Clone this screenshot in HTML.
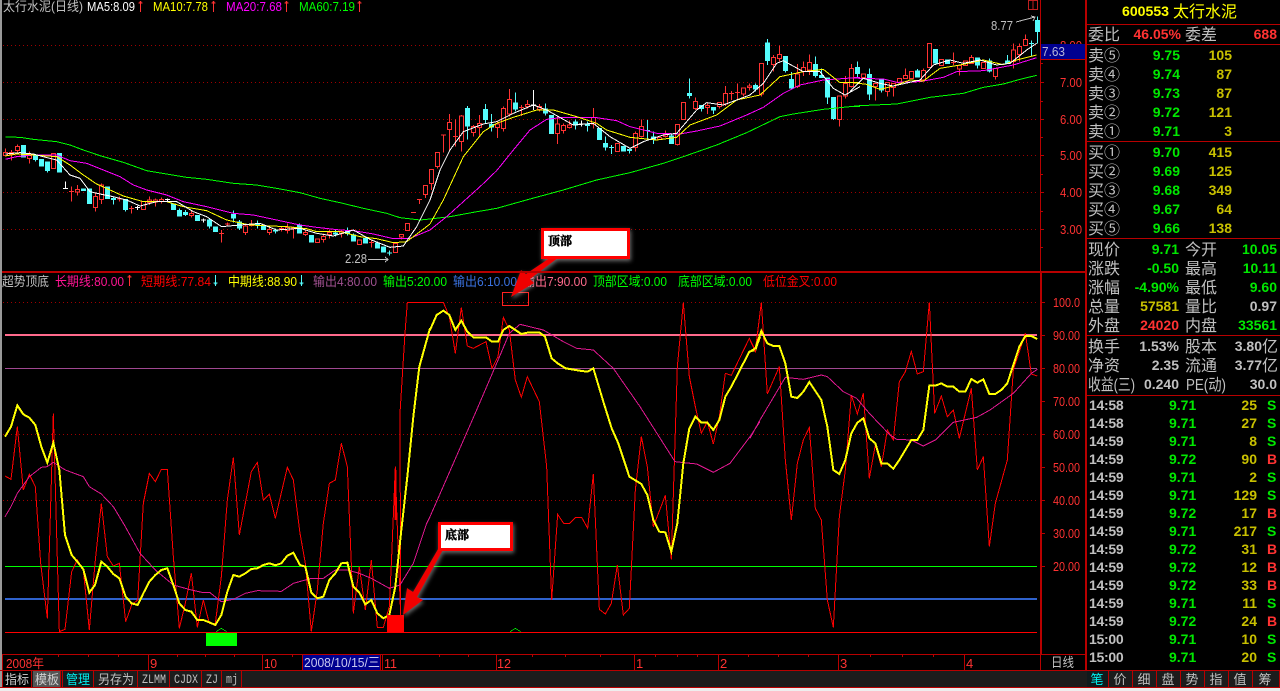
<!DOCTYPE html>
<html><head><meta charset="utf-8"><title>600553</title>
<style>
html,body{margin:0;padding:0;background:#000;width:1280px;height:691px;overflow:hidden}
svg{display:block}
text{font-family:"Liberation Sans","WenQuanYi Zen Hei","Noto Sans CJK SC",sans-serif;white-space:pre}
.s{font-size:13px}
.m{font-size:16px;fill:#c0c0c0}
.n{font-size:14px;font-weight:bold}
.n.w:not(.e){letter-spacing:-.3px}
.g{fill:#00e800}.y{fill:#c8c000}.r{fill:#ff3232}.w{fill:#c0c0c0}
.e{text-anchor:end}
.a{font-size:13px;fill:#ff3232;text-anchor:end}
.l{fill:none;shape-rendering:crispEdges}
.b{font-size:12px;font-weight:bold;font-family:"Noto Serif CJK SC",serif;fill:#000;stroke:#000;stroke-width:.5px}
</style></head><body>
<svg xmlns="http://www.w3.org/2000/svg" width="1280" height="691" viewBox="0 0 1280 691">
<rect width="1280" height="691" fill="#000"/>
<rect x="0" y="0" width="2" height="691" fill="#999"/>

<!-- grids -->
<path class="l" stroke="#a00000" stroke-dasharray="1 3" d="M3 45.5H1037M3 82.5H1037M3 119.5H1037M3 155.5H1037M3 192.5H1037M3 229.5H1037M3 302.5H1037M3 434.5H1037M3 500.5H1037"/>

<!-- CANDLES & MA part 1 -->
<g transform="scale(.33333)">
<path class="l" stroke="#ff3232" stroke-width="3" d="M16 445V470M34 450V482M52 433V458M88 455V490M214 560V605M232 555V587M286 580V635M304 550V612M358 590V605M394 618V640M448 590V615M466 595V620M484 593V610M574 632V652M664 690V728M682 668V680M736 670V705M754 660V680M808 680V705M844 680V695M862 670V700M880 680V716M916 690V708M970 700V728M988 690V716M1024 690V712M1114 720V743M1204 703V718M1258 599V612M1276 557V594M207 575h15M351 597h15M387 625h15M657 700h15M675 672h15M873 684h15M1107 727h15M1233 637h15M1251 599h15"/>
<path class="l" stroke="#ff3232" stroke-width="3" style="fill:#000" d="M10 457h12v10h-12zM28 457h12v6h-12zM46 440h12v12h-12zM82 463h12v12h-12zM154 461h12v45h-12zM226 568h12v8h-12zM280 589h12v33h-12zM298 555h12v43h-12zM424 605h12v23h-12zM442 600h12v8h-12zM460 600h12v6h-12zM478 598h12v6h-12zM568 640h12v6h-12zM730 678h12v19h-12zM748 672h12v4h-12zM802 688h12v10h-12zM838 685h12v4h-12zM856 682h12v10h-12zM910 697h12v7h-12zM946 717h12v10h-12zM964 710h12v8h-12zM982 697h12v7h-12zM1018 694h12v6h-12zM1072 720h12v13h-12zM1180 730h12v28h-12zM1198 703h12v8h-12zM1216 670h12v22h-12zM1270 557h12v27h-12z"/>
<path class="l" stroke="#54fcfc" stroke-width="3" d="M106 480V485M142 513V517M340 590V613M376 630V635M538 625V630M556 630V648M628 655V685M700 632V668M718 660V690M772 662V686M826 685V700M898 670V673M1006 690V710M1042 682V706M1060 700V704M1132 725V728M1168 752V767M1161 759h15"/>
<path class="l" stroke="#54fcfc" stroke-width="15" d="M70 435V473M106 463V480M124 477V500M142 485V513M178 459V518M250 565V573M268 565V612M322 560V597M340 594V600M376 597V630M520 610V630M538 630V650M556 636V645M592 645V663M628 658V680M646 680V696M700 642V656M718 665V686M772 669V676M790 678V690M826 690V695M898 673V700M934 705V728M1006 697V703M1042 692V702M1060 704V725M1096 714V730M1132 728V745M1150 740V758"/>
<path class="l" stroke="#fff" stroke-width="3" d="M189 565h15M196 545V565M405 623h15M412 618V630M495 599h15M502 595V603M603 660h15M610 655V668"/>
<polyline class="l" stroke="#00ff00" stroke-width="3" points="16,411 60,412 100,418 170,425 210,435 250,450 300,467 370,487 440,512 500,522 560,532 620,538 700,550 770,555 830,565 900,578 960,595 1020,608 1090,625 1160,640 1200,653 1260,660 1290,657"/>
<polyline class="l" stroke="#ff00ff" stroke-width="3" points="16,478 50,470 100,465 170,465 210,482 260,490 310,510 360,530 400,555 440,570 500,585 550,605 620,620 700,640 760,645 830,660 900,675 950,682 1020,690 1060,692 1120,702 1180,716 1230,715 1290,690"/>
<polyline class="l" stroke="#ffff00" stroke-width="3" points="16,468 50,462 100,465 170,470 210,495 250,525 290,552 330,570 370,588 430,605 500,605 550,620 620,632 680,660 750,675 860,680 920,686 950,695 1020,695 1080,710 1130,716 1180,728 1220,725 1260,695 1290,672"/>
<polyline class="l" stroke="#ffffff" stroke-width="3" points="16,462 60,458 100,462 130,470 170,480 210,525 240,535 270,575 300,582 340,590 380,600 420,618 470,605 530,605 580,635 620,650 665,680 720,675 780,670 830,690 900,685 950,700 1000,708 1060,690 1110,718 1170,742 1210,738 1250,680 1290,600"/>
</g>
<g transform="translate(430,0) scale(.33333)">
<path class="l" stroke="#ff3232" stroke-width="3" d="M4 508V570M22 458V505M40 403V458M58 342V455M76 358V440M94 345V455M130 375V410M148 345V408M202 365V414M220 320V395M238 267V350M274 315V348M292 300V325M328 312V335M382 350V432M400 370V400M418 362V385M490 324V385M616 395V455M634 358V412M706 392V412M742 373V437M796 292V330M832 307V342M868 307V325M886 258V318M904 273V300M922 250V298M940 262V290M958 250V272M994 190V290M1030 165V215M1048 136V185M1102 192V264M1120 185V228M1138 163V225M1228 288V380M1246 228V295M1264 192V262M33 405h15M69 410h15M267 322h15M897 280h15M915 278h15"/>
<path class="l" stroke="#ff3232" stroke-width="3" style="fill:#000" d="M-2 508h12v42h-12zM16 458h12v42h-12zM52 367h12v21h-12zM88 348h12v77h-12zM124 380h12v18h-12zM142 370h12v12h-12zM196 372h12v10h-12zM214 325h12v61h-12zM232 298h12v44h-12zM286 313h12v6h-12zM322 320h12v8h-12zM376 372h12v28h-12zM394 376h12v16h-12zM412 375h12v7h-12zM484 352h12v20h-12zM556 430h12v25h-12zM610 400h12v42h-12zM628 380h12v30h-12zM682 413h12v6h-12zM700 404h12v6h-12zM736 373h12v61h-12zM754 307h12v52h-12zM790 304h12v22h-12zM826 316h12v6h-12zM862 307h12v13h-12zM880 280h12v32h-12zM934 264h12v18h-12zM952 258h12v5h-12zM988 190h12v92h-12zM1024 172h12v22h-12zM1042 163h12v13h-12zM1096 222h12v38h-12zM1114 202h12v12h-12zM1132 187h12v23h-12zM1222 288h12v70h-12zM1240 250h12v38h-12zM1258 205h12v55h-12z"/>
<path class="l" stroke="#54fcfc" stroke-width="3" d="M112 318V418M166 312V370M184 342V395M256 277V335M346 310V347M436 358V388M472 365V395M526 410V452M544 435V462M537 442h15M598 447V460M652 360V420M645 392h15M670 395V432M724 400V432M778 235V295M814 315V335M850 321V342M976 250V275M1012 117V195M1066 168V217M1084 216V268M1156 170V232M1174 205V234M1192 232V312M1210 291V360M1282 185V235"/>
<path class="l" stroke="#54fcfc" stroke-width="15" d="M112 324V380M166 327V360M184 372V382M256 307V328M346 325V340M364 345V402M436 365V376M472 372V378M508 384V420M526 429V443M580 438V455M598 447V453M670 410V420M724 407V432M778 279V288M814 315V327M850 321V332M976 255V268M1012 128V183M1066 168V213M1084 237V265M1156 192V228M1174 225V234M1192 232V293M1210 291V357M1282 201V222"/>
<path class="l" stroke="#fff" stroke-width="3" d="M303 315h15M310 270V330M447 372h15M454 362V380"/>
<polyline class="l" stroke="#00ff00" stroke-width="3" points="0,657 60,650 130,637 200,625 300,597 400,570 500,540 600,518 700,490 760,470 860,435 950,398 1050,350 1090,342 1180,328 1260,320 1290,320"/>
<polyline class="l" stroke="#ff00ff" stroke-width="3" points="0,690 50,650 100,605 150,560 200,512 250,450 300,390 350,358 400,352 500,353 560,362 600,380 680,400 750,402 800,393 870,378 950,345 1000,322 1060,280 1110,255 1180,240 1290,232"/>
<polyline class="l" stroke="#ffff00" stroke-width="3" points="0,672 40,600 100,470 160,395 200,370 250,352 320,330 370,330 440,350 500,370 530,390 600,412 680,420 740,412 780,375 860,345 920,300 990,285 1050,230 1120,215 1180,208 1230,248 1290,247"/>
<polyline class="l" stroke="#ffffff" stroke-width="3" points="0,600 30,510 60,450 100,395 160,372 200,365 250,340 310,315 350,330 430,375 490,370 540,410 600,445 640,425 700,405 740,400 800,330 830,308 880,315 960,285 1000,250 1040,190 1060,182 1120,215 1170,215 1210,265 1245,285 1290,260"/>
</g>
<g transform="translate(850,0) scale(.33333)">
<path class="l" stroke="#ff3232" stroke-width="3" d="M40 222V232M76 250V302M112 248V290M130 250V290M148 236V248M166 205V236M184 214V235M220 205V240M238 130V202M274 178V197M310 157V195M303 188h15M328 197V227M346 183V197M364 165V190M400 188V206M436 205V238M490 130V205M508 130V185M526 104V137"/>
<path class="l" stroke="#ff3232" stroke-width="3" style="fill:#000" d="M34 222h12v10h-12zM70 250h12v10h-12zM106 248h12v27h-12zM124 250h12v12h-12zM142 236h12v12h-12zM160 226h12v10h-12zM178 214h12v21h-12zM214 211h12v29h-12zM232 130h12v72h-12zM268 178h12v19h-12zM322 197h12v10h-12zM340 183h12v14h-12zM358 172h12v18h-12zM394 188h12v18h-12zM430 205h12v25h-12zM484 150h12v35h-12zM502 140h12v23h-12zM520 118h12v19h-12z"/>
<path class="l" stroke="#54fcfc" stroke-width="3" d="M58 205V300M94 237V278M202 207V232M382 172V205M418 175V218M472 165V190M544 122V170M537 130h15M562 50V130"/>
<path class="l" stroke="#54fcfc" stroke-width="15" d="M58 222V283M94 237V272M202 211V232M256 147V190M292 178V192M382 172V197M418 181V215M472 181V190M562 60V96"/>
<polyline class="l" stroke="#00ff00" stroke-width="3" points="0,320 30,317 140,312 240,292 340,280 400,262 460,252 510,238 560,226"/>
<polyline class="l" stroke="#ff00ff" stroke-width="3" points="0,234 100,237 140,247 210,245 280,232 320,215 400,212 490,195 560,173"/>
<polyline class="l" stroke="#ffff00" stroke-width="3" points="0,247 50,253 90,268 130,258 180,240 220,243 270,205 330,195 400,180 460,194 500,180 560,165"/>
<polyline class="l" stroke="#ffffff" stroke-width="3" points="0,275 40,235 90,250 130,258 210,240 250,195 300,180 340,190 390,180 440,195 480,190 530,150 560,130"/>
</g>

<!-- top annotations -->
<text x="345" y="263" class="s" fill="#c0c0c0" textLength="22" lengthAdjust="spacingAndGlyphs">2.28</text>
<path class="l" stroke="#c0c0c0" d="M368 259.5H388M385 257l3 2.5l-3 2.5"/>
<text x="991" y="30" class="s" fill="#c0c0c0" textLength="22" lengthAdjust="spacingAndGlyphs">8.77</text>
<path class="l" stroke="#c0c0c0" d="M1016 22L1035 17M1031 16l4 1l-2 4"/>
<path class="l" stroke="#c02020" d="M1028.5 .5h9v9h-9zM1033 0v9"/>

<!-- top legend -->
<text x="3" y="11" class="s" fill="#c0c0c0" textLength="80" lengthAdjust="spacingAndGlyphs">太行水泥(日线)</text>
<text x="87" y="11" class="s" fill="#ffffff" textLength="48" lengthAdjust="spacingAndGlyphs">MA5:8.09</text>
<text x="153" y="11" class="s" fill="#ffff00" textLength="55" lengthAdjust="spacingAndGlyphs">MA10:7.78</text>
<text x="226" y="11" class="s" fill="#ff00ff" textLength="56" lengthAdjust="spacingAndGlyphs">MA20:7.68</text>
<text x="299" y="11" class="s" fill="#00ff00" textLength="56" lengthAdjust="spacingAndGlyphs">MA60:7.19</text>
<path class="l" stroke="#ff3232" d="M140.5 1V12M138.5 3h4M139.5 2h2M213.5 1V12M211.5 3h4M212.5 2h2M286.5 1V12M284.5 3h4M285.5 2h2M359.5 1V12M357.5 3h4M358.5 2h2"/>

<!-- indicator hlines -->
<rect x="5" y="334" width="1032" height="2" fill="#ff6a8c"/>
<rect x="5" y="368" width="1032" height="1" fill="#a04890"/>
<rect x="5" y="566" width="1032" height="1" fill="#00ff00"/>
<rect x="5" y="598" width="1032" height="2" fill="#2f62cc"/>
<rect x="5" y="632" width="1032" height="1" fill="#ff0000"/>

<!-- indicator curves -->
<g transform="translate(0,270) scale(.33333)">
<polyline class="l" stroke="#ff0000" stroke-width="3" points="15,618 33,628 52,470 70,660 88,613 106,650 122,880 142,1045 160,430 178,1085 195,1078 215,905 232,870 250,900 268,1080 285,880 304,700 322,860 340,888 358,880 377,1055 395,1005 413,990 430,700 448,610 466,635 484,598 502,598 520,860 538,1075 556,1000 574,910 592,1072 610,990 628,1060 646,1060 664,920 682,690 700,562 718,795 736,700 754,605 772,577 790,690 808,672 826,745 862,592 880,630 900,790 916,880 934,1085 952,960 970,760 988,640 1006,630 1024,520 1042,590 1060,1030 1078,890 1096,1020 1114,870 1132,1072 1150,1072 1168,1010 1175,860 1186,590 1190,720 1202,1035 1200,430 1215,190 1222,97 1290,97"/>
<path class="l" stroke="#ff0000" stroke-width="6" d="M1187 600V750"/>
<polyline class="l" stroke="#e01890" stroke-width="3" points="15,740 33,710 52,670 88,620 124,592 142,590 160,577 196,600 250,620 268,650 304,672 340,710 376,770 420,850 466,900 520,945 574,960 610,968 630,968 664,995 700,988 736,970 772,962 844,964 880,940 934,925 970,925 1006,900 1042,900 1078,910 1114,925 1168,955 1200,945 1240,880 1280,760 1290,740"/>
<polyline class="l" stroke="#ffff00" stroke-width="6" points="15,500 33,470 52,406 70,433 88,443 106,465 124,530 142,578 160,518 178,600 195,795 215,855 232,875 250,898 268,968 285,945 304,875 322,890 340,912 358,925 377,980 395,1000 413,1005 430,970 448,935 466,915 484,900 502,895 520,945 538,1000 556,1020 574,1025 592,1050 610,1050 628,1057 646,1065 664,1035 682,965 700,915 718,920 736,910 754,897 772,895 790,885 808,880 826,886 844,880 862,857 880,848 900,885 916,890 934,968 952,985 970,980 988,930 1006,910 1024,880 1042,878 1060,950 1078,968 1096,1003 1114,990 1132,1030 1150,1045 1168,1035 1186,950 1204,780 1222,620 1240,440 1258,290 1290,175"/>
<polyline class="l" stroke="#00ff00" stroke-width="2" points="648,1085 664,1075 680,1085"/>
</g>
<g transform="translate(430,270) scale(.33333)">
<polyline class="l" stroke="#ff0000" stroke-width="3" points="0,97 40,97 58,140 76,250 94,112 112,228 130,235 168,215 186,295 204,260 220,142 238,180 256,330 274,382 292,320 328,395 350,590 365,990 383,733 401,760 419,760 437,742 455,742 473,775 490,612 508,1018 526,1032 544,1000 562,885 580,1035 598,1015 616,660 634,500 652,590 670,770 706,676 724,868 742,290 760,98 778,320 796,410 814,490 832,455 850,522 868,440 886,310 904,316 958,205 976,240 990,130"/>
<polyline class="l" stroke="#e01890" stroke-width="3" points="0,740 70,580 140,420 200,280 238,190 270,163 340,180 400,215 440,235 490,240 550,295 630,410 700,520 735,575 800,582 850,607 900,580 960,500 990,455"/>
<polyline class="l" stroke="#ffff00" stroke-width="6" points="0,180 20,135 40,122 58,135 76,180 94,152 112,185 130,202 168,202 186,215 204,215 220,180 238,168 256,180 274,192 292,188 328,187 345,200 365,265 383,280 407,295 455,303 473,305 490,295 520,395 545,475 565,520 598,620 634,642 652,675 670,750 688,785 706,787 724,845 742,760 760,580 778,475 796,440 814,458 832,458 850,480 868,450 886,380 904,350 940,280 958,245 976,240 990,200"/>
<polyline class="l" stroke="#00ff00" stroke-width="2" points="240,1085 256,1075 272,1085"/>
</g>
<g transform="translate(750,270) scale(.33333)">
<polyline class="l" stroke="#ff0000" stroke-width="3" points="0,210 16,245 34,97 52,372 88,290 106,570 124,750 142,580 160,510 178,472 196,715 214,750 232,990 250,1072 268,740 286,600 304,375 322,432 340,370 358,625 376,525 394,590 412,480 430,510 448,335 466,305 484,244 502,312 520,305 538,97 554,430 574,378 592,440 610,420 628,505 664,355 682,600 700,560 718,830 736,700 772,570 790,300 826,190 844,312 862,318"/>
<polyline class="l" stroke="#e01890" stroke-width="3" points="0,505 30,450 106,322 160,328 214,315 232,320 280,365 320,385 358,430 420,495 440,508 484,510 520,528 556,510 610,457 680,442 720,420 790,370 844,310 862,298"/>
<polyline class="l" stroke="#ffff00" stroke-width="6" points="0,245 16,235 34,183 52,220 70,228 88,228 106,280 124,380 142,384 160,365 178,336 214,390 232,470 250,600 268,612 286,570 304,490 322,458 340,445 358,505 376,520 394,580 412,580 430,596 448,570 484,510 502,510 520,480 538,347 556,347 574,340 592,350 610,350 628,365 646,365 664,327 682,338 700,328 718,372 736,372 754,360 772,340 790,285 808,230 826,198 844,198 862,207"/>
</g>
<rect x="206" y="633" width="31" height="13" fill="#00ff00"/>
<rect x="387" y="615" width="17" height="17" fill="#ff0000"/>

<!-- indicator legend -->
<text x="2" y="286" class="s" fill="#c0c0c0" textLength="47" lengthAdjust="spacingAndGlyphs">超势顶底</text>
<text x="55" y="286" class="s" fill="#ff1493" textLength="69" lengthAdjust="spacingAndGlyphs">长期线:80.00</text>
<text x="141" y="286" class="s" fill="#ff0000" textLength="70" lengthAdjust="spacingAndGlyphs">短期线:77.84</text>
<text x="228" y="286" class="s" fill="#ffff00" textLength="69" lengthAdjust="spacingAndGlyphs">中期线:88.90</text>
<text x="313" y="286" class="s" fill="#a05090" textLength="64" lengthAdjust="spacingAndGlyphs">输出4:80.00</text>
<text x="383" y="286" class="s" fill="#00ff00" textLength="64" lengthAdjust="spacingAndGlyphs">输出5:20.00</text>
<text x="453" y="286" class="s" fill="#3a72e0" textLength="64" lengthAdjust="spacingAndGlyphs">输出6:10.00</text>
<text x="523" y="286" class="s" fill="#ff6a8c" textLength="64" lengthAdjust="spacingAndGlyphs">输出7:90.00</text>
<text x="593" y="286" class="s" fill="#00ff00" textLength="74" lengthAdjust="spacingAndGlyphs">顶部区域:0.00</text>
<text x="678" y="286" class="s" fill="#00ff00" textLength="74" lengthAdjust="spacingAndGlyphs">底部区域:0.00</text>
<text x="763" y="286" class="s" fill="#ff0000" textLength="74" lengthAdjust="spacingAndGlyphs">低位金叉:0.00</text>
<path class="l" stroke="#ff3232" d="M129.5 275V286M127.5 277h4M128.5 276h2"/>
<path class="l" stroke="#54fcfc" d="M215.5 275V286M213.5 283h4M214.5 284h2M301.5 275V286M299.5 283h4M300.5 284h2"/>

<!-- annotations -->
<rect x="502.5" y="292.5" width="26" height="13" fill="none" stroke="#ff2020" class="l"/>
<g style="filter:drop-shadow(1px 2px 2px rgba(180,180,180,.6))">
<path d="M563 254L530 279L534 283L511 297L521 270L526 274L560 251Z" fill="#f00000"/>
<rect x="542.5" y="229.5" width="86" height="28" fill="#fff" stroke="#ff0000" stroke-width="3"/>
<path d="M445 546L417 597L423 600L403 615L407 588L413 592L441 544Z" fill="#f00000"/>
<rect x="439.5" y="523.5" width="72" height="26" fill="#fff" stroke="#ff0000" stroke-width="3"/>
</g>
<text x="548" y="245" class="b">顶部</text>
<text x="445" y="539" class="b">底部</text>

<!-- frames -->
<path class="l" stroke="#b80000" d="M1040.5 0V272M1085.5 0V688"/>
<rect x="1040" y="272" width="2" height="382" fill="#b80000"/>
<rect x="1085" y="0" width="2" height="688" fill="#b80000"/>
<rect x="2" y="271" width="1083" height="2" fill="#b80000"/>
<rect x="2" y="654" width="1083" height="1" fill="#b80000"/>
<rect x="2" y="654" width="1" height="34" fill="#b80000"/>

<!-- top axis -->
<path class="l" stroke="#b80000" d="M1041 45.5h3M1041 63.5h2M1041 82.5h3M1041 101.5h2M1041 119.5h3M1041 137.5h2M1041 155.5h3M1041 174.5h2M1041 192.5h3M1041 211.5h2M1041 229.5h3M1041 247.5h2"/>
<text x="1082" y="50" class="a" textLength="22" lengthAdjust="spacingAndGlyphs">8.00</text>
<rect x="1041" y="44" width="44" height="15" fill="#000090"/>
<rect x="1041" y="59" width="44" height="1" fill="#b80000"/>
<text x="1042" y="56" class="s" fill="#b8b8d8" textLength="23" lengthAdjust="spacingAndGlyphs">7.63</text>
<text x="1082" y="87" class="a" textLength="22" lengthAdjust="spacingAndGlyphs">7.00</text>
<text x="1082" y="124" class="a" textLength="22" lengthAdjust="spacingAndGlyphs">6.00</text>
<text x="1082" y="160" class="a" textLength="22" lengthAdjust="spacingAndGlyphs">5.00</text>
<text x="1082" y="197" class="a" textLength="22" lengthAdjust="spacingAndGlyphs">4.00</text>
<text x="1082" y="234" class="a" textLength="22" lengthAdjust="spacingAndGlyphs">3.00</text>

<!-- lower axis -->
<path class="l" stroke="#b80000" d="M1042 302.5h3M1042 335.5h3M1042 368.5h3M1042 401.5h3M1042 434.5h3M1042 467.5h3M1042 500.5h3M1042 533.5h3M1042 566.5h3"/>
<text x="1053" y="307" class="s r" textLength="27" lengthAdjust="spacingAndGlyphs">100.0</text>
<text x="1053" y="340" class="s r" textLength="27" lengthAdjust="spacingAndGlyphs">90.00</text>
<text x="1053" y="373" class="s r" textLength="27" lengthAdjust="spacingAndGlyphs">80.00</text>
<text x="1053" y="406" class="s r" textLength="27" lengthAdjust="spacingAndGlyphs">70.00</text>
<text x="1053" y="439" class="s r" textLength="27" lengthAdjust="spacingAndGlyphs">60.00</text>
<text x="1053" y="472" class="s r" textLength="27" lengthAdjust="spacingAndGlyphs">50.00</text>
<text x="1053" y="505" class="s r" textLength="27" lengthAdjust="spacingAndGlyphs">40.00</text>
<text x="1053" y="538" class="s r" textLength="27" lengthAdjust="spacingAndGlyphs">30.00</text>
<text x="1053" y="571" class="s r" textLength="27" lengthAdjust="spacingAndGlyphs">20.00</text>

<!-- date bar -->
<rect x="303" y="655" width="77" height="15" fill="#000090"/>
<path class="l" stroke="#b80000" d="M148.5 654V670M262.5 654V670M302.5 654V670M380.5 654V670M382.5 654V670M496.5 654V670M634.5 654V670M718.5 654V670M838.5 654V670M964.5 654V670M1040.5 654V670M58.5 654V657M88.5 654V657M118.5 654V657M177.5 654V657M205.5 654V657M234.5 654V657M292.5 654V657M439.5 654V657M468.5 654V657M532.5 654V657M565.5 654V657M600.5 654V657M655.5 654V657M677.5 654V657M697.5 654V657M748.5 654V657M778.5 654V657M808.5 654V657M870.5 654V657M902.5 654V657M933.5 654V657"/>
<text x="6" y="668" class="s r" textLength="38" lengthAdjust="spacingAndGlyphs">2008年</text>
<text x="150" y="668" class="s r">9</text>
<text x="264" y="668" class="s r" textLength="13" lengthAdjust="spacingAndGlyphs">10</text>
<text x="304" y="667" class="s" fill="#c8c8f0" textLength="76" lengthAdjust="spacingAndGlyphs">2008/10/15/三</text>
<text x="384" y="668" class="s r" textLength="13" lengthAdjust="spacingAndGlyphs">11</text>
<text x="497" y="668" class="s r" textLength="14" lengthAdjust="spacingAndGlyphs">12</text>
<text x="636" y="668" class="s r">1</text>
<text x="720" y="668" class="s r">2</text>
<text x="840" y="668" class="s r">3</text>
<text x="966" y="668" class="s r">4</text>
<text x="1051" y="667" class="s" fill="#c0c0c0" textLength="23" lengthAdjust="spacingAndGlyphs">日线</text>

<!-- toolbar -->
<rect x="3" y="671" width="1277" height="17" fill="#1c1c1c"/>
<rect x="3" y="671" width="28" height="17" fill="#000"/>
<rect x="33" y="671" width="27" height="17" fill="#555"/>
<rect x="63" y="671" width="30" height="17" fill="#101a1c"/>
<rect x="0" y="670" width="1280" height="1" fill="#b80000"/>
<rect x="0" y="687" width="1280" height="1" fill="#b80000"/>
<rect x="0" y="688" width="1280" height="3" fill="#eeeeee"/>
<path class="l" stroke="#b80000" d="M31.5 670V688M60.5 670V688M62.5 670V688M93.5 670V688M137.5 670V688M169.5 670V688M201.5 670V688M221.5 670V688M241.5 670V688"/>
<text x="5" y="684" class="s" fill="#d0d0d0" textLength="24" lengthAdjust="spacingAndGlyphs">指标</text>
<text x="35" y="684" class="s" fill="#d0d0d0" textLength="24" lengthAdjust="spacingAndGlyphs">模板</text>
<text x="66" y="684" class="s" fill="#00f0f0" textLength="24" lengthAdjust="spacingAndGlyphs">管理</text>
<text x="98" y="684" class="s" fill="#c0c0c0" textLength="36" lengthAdjust="spacingAndGlyphs">另存为</text>
<text x="142" y="683" class="s" fill="#c0c0c0" textLength="24" lengthAdjust="spacingAndGlyphs" style="font-family:'Liberation Mono',monospace">ZLMM</text>
<text x="174" y="683" class="s" fill="#c0c0c0" textLength="24" lengthAdjust="spacingAndGlyphs" style="font-family:'Liberation Mono',monospace">CJDX</text>
<text x="206" y="683" class="s" fill="#c0c0c0" textLength="12" lengthAdjust="spacingAndGlyphs" style="font-family:'Liberation Mono',monospace">ZJ</text>
<text x="226" y="683" class="s" fill="#c0c0c0" textLength="12" lengthAdjust="spacingAndGlyphs" style="font-family:'Liberation Mono',monospace">mj</text>

<!-- right tabs -->
<rect x="1087" y="671" width="21" height="16" fill="#101a1c"/>
<path class="l" stroke="#b80000" d="M1108.5 670V688M1132.5 670V688M1156.5 670V688M1180.5 670V688M1204.5 670V688M1228.5 670V688M1252.5 670V688M1279.5 670V688"/>
<g font-size="13" fill="#c0c0c0" text-anchor="middle">
<text x="1097" y="684" fill="#00f0f0">笔</text><text x="1120" y="684">价</text><text x="1144" y="684">细</text><text x="1168" y="684">盘</text><text x="1192" y="684">势</text><text x="1216" y="684">指</text><text x="1240" y="684">值</text><text x="1265" y="684">筹</text>
</g>

<!-- right panel lines -->
<path class="l" stroke="#b80000" d="M1085 24.5H1280M1085 44.5H1280M1085 141.5H1280M1085 238.5H1280M1085 335.5H1280M1085 395.5H1280"/>

<text x="1122" y="16" class="n" fill="#ffff00" textLength="47" lengthAdjust="spacingAndGlyphs">600553</text>
<text x="1173" y="17" font-size="16" fill="#ffff00">太行水泥</text>

<text x="1088" y="40" class="m">委比</text>
<text x="1181" y="39" class="n r e">46.05%</text>
<text x="1185" y="40" class="m">委差</text>
<text x="1277" y="39" class="n r e">688</text>

<g>
<text x="1088" y="61" class="m">卖⑤</text><text x="1180" y="60" class="n g e">9.75</text><text x="1232" y="60" class="n y e">105</text>
<text x="1088" y="80" class="m">卖④</text><text x="1180" y="79" class="n g e">9.74</text><text x="1232" y="79" class="n y e">87</text>
<text x="1088" y="99" class="m">卖③</text><text x="1180" y="98" class="n g e">9.73</text><text x="1232" y="98" class="n y e">87</text>
<text x="1088" y="118" class="m">卖②</text><text x="1180" y="117" class="n g e">9.72</text><text x="1232" y="117" class="n y e">121</text>
<text x="1088" y="137" class="m">卖①</text><text x="1180" y="136" class="n g e">9.71</text><text x="1232" y="136" class="n y e">3</text>
<text x="1088" y="158" class="m">买①</text><text x="1180" y="157" class="n g e">9.70</text><text x="1232" y="157" class="n y e">415</text>
<text x="1088" y="177" class="m">买②</text><text x="1180" y="176" class="n g e">9.69</text><text x="1232" y="176" class="n y e">125</text>
<text x="1088" y="196" class="m">买③</text><text x="1180" y="195" class="n g e">9.68</text><text x="1232" y="195" class="n y e">349</text>
<text x="1088" y="215" class="m">买④</text><text x="1180" y="214" class="n g e">9.67</text><text x="1232" y="214" class="n y e">64</text>
<text x="1088" y="234" class="m">买⑤</text><text x="1180" y="233" class="n g e">9.66</text><text x="1232" y="233" class="n y e">138</text>
</g>

<g>
<text x="1088" y="255" class="m">现价</text><text x="1179" y="254" class="n g e">9.71</text><text x="1185" y="255" class="m">今开</text><text x="1277" y="254" class="n g e">10.05</text>
<text x="1088" y="274" class="m">涨跌</text><text x="1179" y="273" class="n g e">-0.50</text><text x="1185" y="274" class="m">最高</text><text x="1277" y="273" class="n g e">10.11</text>
<text x="1088" y="293" class="m">涨幅</text><text x="1179" y="292" class="n g e">-4.90%</text><text x="1185" y="293" class="m">最低</text><text x="1277" y="292" class="n g e">9.60</text>
<text x="1088" y="312" class="m">总量</text><text x="1179" y="311" class="n y e">57581</text><text x="1185" y="312" class="m">量比</text><text x="1277" y="311" class="n w e">0.97</text>
<text x="1088" y="331" class="m">外盘</text><text x="1179" y="330" class="n r e">24020</text><text x="1185" y="331" class="m">内盘</text><text x="1277" y="330" class="n g e">33561</text>
<text x="1088" y="352" class="m">换手</text><text x="1179" y="351" class="n w e">1.53%</text><text x="1185" y="352" class="m">股本</text><text x="1262" y="351" class="n w e">3.80</text><text x="1262" y="352" class="m">亿</text>
<text x="1088" y="371" class="m">净资</text><text x="1179" y="370" class="n w e">2.35</text><text x="1185" y="371" class="m">流通</text><text x="1262" y="370" class="n w e">3.77</text><text x="1262" y="371" class="m">亿</text>
<text x="1088" y="390" class="m" textLength="47" lengthAdjust="spacingAndGlyphs">收益(三)</text><text x="1179" y="389" class="n w e">0.240</text><text x="1186" y="390" class="m" textLength="40" lengthAdjust="spacingAndGlyphs">PE(动)</text><text x="1277" y="389" class="n w e">30.0</text>
</g>

<g>
<text x="1089" y="410" class="n w">14:58</text><text x="1169" y="410" class="n g">9.71</text><text x="1257" y="410" class="n y e">25</text><text x="1267" y="410" class="n g">S</text>
<text x="1089" y="428" class="n w">14:58</text><text x="1169" y="428" class="n g">9.71</text><text x="1257" y="428" class="n y e">27</text><text x="1267" y="428" class="n g">S</text>
<text x="1089" y="446" class="n w">14:59</text><text x="1169" y="446" class="n g">9.71</text><text x="1257" y="446" class="n y e">8</text><text x="1267" y="446" class="n g">S</text>
<text x="1089" y="464" class="n w">14:59</text><text x="1169" y="464" class="n g">9.72</text><text x="1257" y="464" class="n y e">90</text><text x="1267" y="464" class="n r">B</text>
<text x="1089" y="482" class="n w">14:59</text><text x="1169" y="482" class="n g">9.71</text><text x="1257" y="482" class="n y e">2</text><text x="1267" y="482" class="n g">S</text>
<text x="1089" y="500" class="n w">14:59</text><text x="1169" y="500" class="n g">9.71</text><text x="1257" y="500" class="n y e">129</text><text x="1267" y="500" class="n g">S</text>
<text x="1089" y="518" class="n w">14:59</text><text x="1169" y="518" class="n g">9.72</text><text x="1257" y="518" class="n y e">17</text><text x="1267" y="518" class="n r">B</text>
<text x="1089" y="536" class="n w">14:59</text><text x="1169" y="536" class="n g">9.71</text><text x="1257" y="536" class="n y e">217</text><text x="1267" y="536" class="n g">S</text>
<text x="1089" y="554" class="n w">14:59</text><text x="1169" y="554" class="n g">9.72</text><text x="1257" y="554" class="n y e">31</text><text x="1267" y="554" class="n r">B</text>
<text x="1089" y="572" class="n w">14:59</text><text x="1169" y="572" class="n g">9.72</text><text x="1257" y="572" class="n y e">12</text><text x="1267" y="572" class="n r">B</text>
<text x="1089" y="590" class="n w">14:59</text><text x="1169" y="590" class="n g">9.72</text><text x="1257" y="590" class="n y e">33</text><text x="1267" y="590" class="n r">B</text>
<text x="1089" y="608" class="n w">14:59</text><text x="1169" y="608" class="n g">9.71</text><text x="1257" y="608" class="n y e">11</text><text x="1267" y="608" class="n g">S</text>
<text x="1089" y="626" class="n w">14:59</text><text x="1169" y="626" class="n g">9.72</text><text x="1257" y="626" class="n y e">24</text><text x="1267" y="626" class="n r">B</text>
<text x="1089" y="644" class="n w">15:00</text><text x="1169" y="644" class="n g">9.71</text><text x="1257" y="644" class="n y e">10</text><text x="1267" y="644" class="n g">S</text>
<text x="1089" y="662" class="n w">15:00</text><text x="1169" y="662" class="n g">9.71</text><text x="1257" y="662" class="n y e">20</text><text x="1267" y="662" class="n g">S</text>
</g>
</svg>
</body></html>
